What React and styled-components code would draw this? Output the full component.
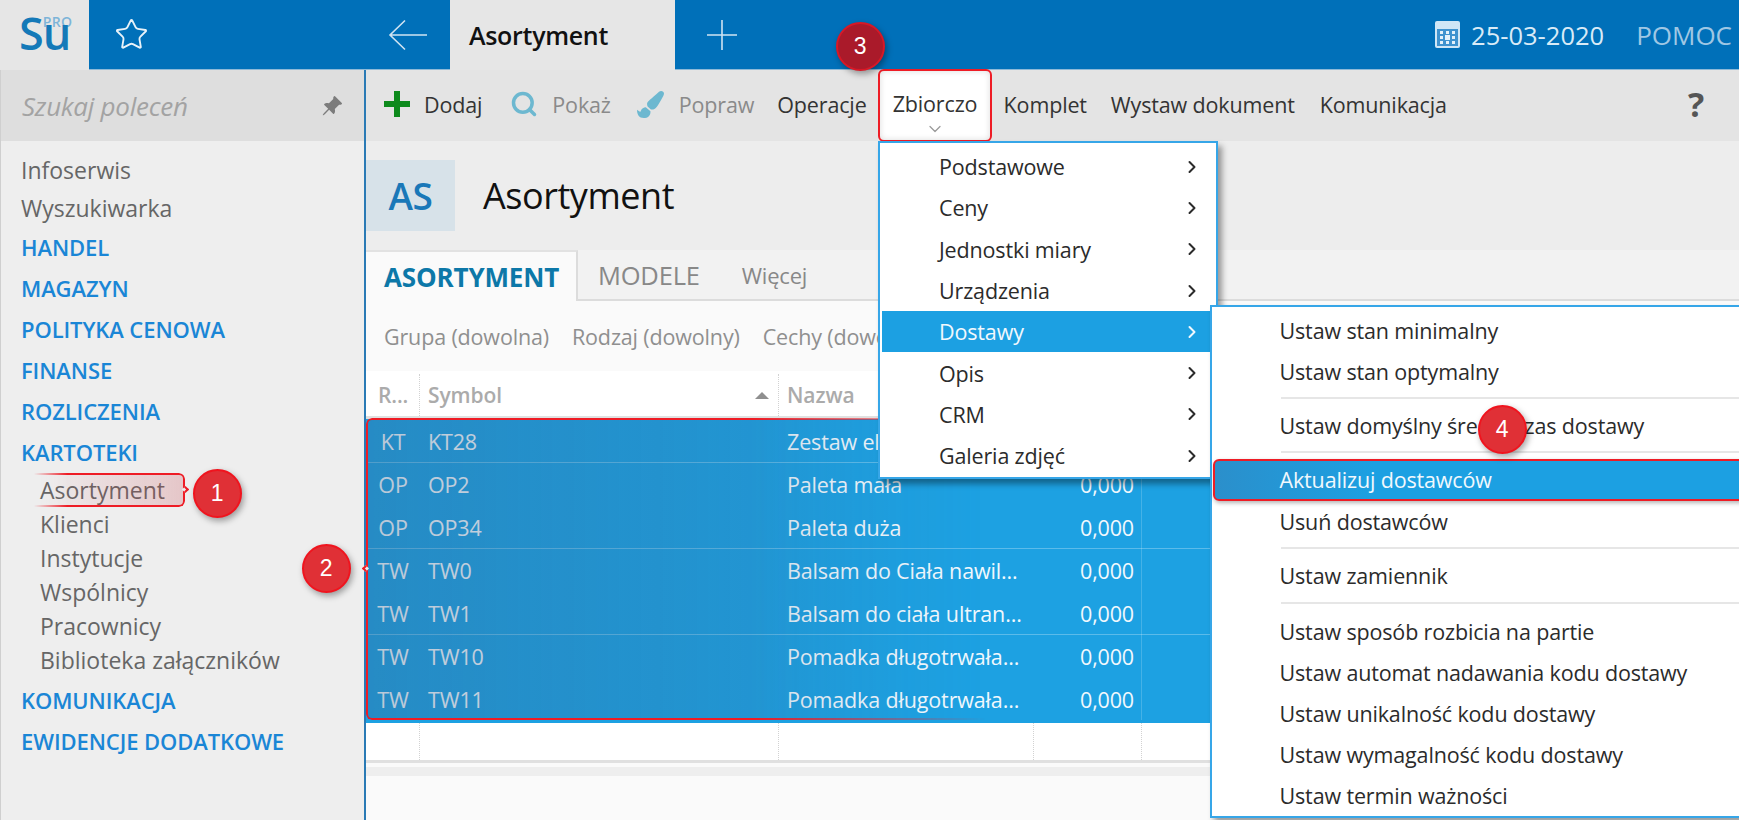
import React from 'react';
import styled, { createGlobalStyle } from 'styled-components';
import { Star, Search, ChevronRight, ChevronDown } from 'lucide-react';
import { BsPinAngleFill } from 'react-icons/bs';
import { FaPaintBrush } from 'react-icons/fa';

const GlobalStyle = createGlobalStyle`
  html, body {
    margin: 0;
    padding: 0;
    overflow: hidden;
    background: #fafafa;
  }
  * {
    box-sizing: border-box;
  }
  body {
    font-family: "Open Sans", "Noto Sans", sans-serif;
    font-size: 21.5px;
    letter-spacing: -0.15px;
    color: #333;
  }
`;

const Page = styled.div`
  position: relative;
  width: 1739px;
  height: 820px;
  overflow: hidden;
`;

const TopBar = styled.header`
  display: flex;
  align-items: stretch;
  height: 70px;
  background: #0070b9;
  border-bottom: 1px solid #8db9d8;
`;

const Logo = styled.div`
  width: 89px;
  height: 70px;
  background: #e6e6e6;
  display: flex;
  padding: 3px 0 0 19px;
  color: #1479b8;
  font-size: 45px;
  font-weight: 600;
  letter-spacing: 0;
  line-height: 60px;
`;

const LogoStack = styled.div`
  display: flex;
  flex-direction: column;
  margin-left: -1px;
  height: 60px;

  b {
    font-size: 14px;
    font-weight: 600;
    line-height: 14px;
    height: 14px;
    margin: 12px 0 -26px;
    letter-spacing: 0.4px;
    color: #7db4d8;
  }
`;

const StarSlot = styled.div`
  width: 299px;
  display: flex;
  align-items: center;
  padding-left: 25px;
  color: #e8f2f9;
`;

const BackSlot = styled.div`
  width: 62px;
  display: flex;
  align-items: center;
`;

const ActiveTab = styled.div`
  width: 225px;
  height: 70px;
  background: #e6e6e6;
  display: flex;
  align-items: center;
  padding-left: 19px;
  color: #111;
  font-size: 25px;
  font-weight: 600;
  letter-spacing: -0.3px;
`;

const AddSlot = styled.div`
  width: 94px;
  display: flex;
  align-items: center;
  justify-content: center;
`;

const TopRight = styled.div`
  margin-left: auto;
  display: flex;
  align-items: center;
  padding-right: 7px;
  color: #d9ebf7;
`;

const DateText = styled.span`
  margin-left: 11px;
  margin-right: 32px;
  font-size: 25.5px;
  letter-spacing: 0;
`;

const Help = styled.span`
  color: #9fc7e4;
  font-size: 26px;
  letter-spacing: 0;
`;

const Body = styled.div`
  display: flex;
  height: 750px;
`;

const Sidebar = styled.aside`
  width: 366px;
  flex: none;
  background: #eeeeee;
  border-left: 1px solid #cfcfcf;
  border-right: 2px solid #2a7ab5;
`;

const SearchBox = styled.div`
  height: 71px;
  background: #dedede;
  display: flex;
  align-items: center;
  justify-content: space-between;
  padding: 0 21px;
  color: #a3a3a3;
  font-size: 26px;
  font-style: italic;
  letter-spacing: -0.25px;

  svg {
    color: #7c7c7c;
  }
`;

const NavList = styled.nav`
  padding: 10px 0 0 20px;
`;

const NavItem = styled.div`
  height: 38px;
  line-height: 38px;
  color: #666;
  font-size: 23px;
  letter-spacing: 0;
`;

const NavGroup = styled.div`
  height: 41px;
  line-height: 41px;
  color: #1a86d6;
  font-size: 22px;
  font-weight: 600;
  letter-spacing: -0.1px;
`;

const NavChild = styled.div`
  position: relative;
  height: 34px;
  line-height: 34px;
  margin-left: 13px;
  margin-bottom: ${(p) => (p.$tail ? 3 : 0)}px;
  width: 151px;
  padding-left: 6px;
  color: #666;
  font-size: 23px;
  letter-spacing: 0;
  white-space: nowrap;
`;

const Marker = styled.span`
  position: absolute;
  inset: 0;
  border: 2px solid #ee1c25;
  border-left: none;
  border-radius: 0 6px 6px 0;
  background: linear-gradient(to right, rgba(230, 60, 60, 0), rgba(200, 60, 70, 0.22));
  box-shadow: 2px 3px 5px rgba(0, 0, 0, 0.08);
  mask-image: linear-gradient(to right, transparent, #000 22%);
`;

const MarkerNotch = styled.span`
  position: absolute;
  right: -3px;
  top: 14px;
  width: 5px;
  height: 5px;
  border-top: 2px solid #ee1c25;
  border-right: 2px solid #ee1c25;
  transform: rotate(45deg);
  background: #eeeeee;
`;

const Main = styled.main`
  flex: 1;
  min-width: 0;
  display: flex;
  flex-direction: column;
`;

const Toolbar = styled.div`
  height: 71px;
  background: #e4e4e4;
  display: flex;
  align-items: center;
  padding: 0 0 3px 18px;
`;

const ToolButton = styled.div`
  display: flex;
  align-items: center;
  height: 100%;
  margin-right: ${(p) => p.$gap}px;
  color: ${(p) => (p.$muted ? '#8a8a8a' : '#333')};
  white-space: nowrap;

  svg {
    margin-right: ${(p) => (p.$iconGap ? p.$iconGap : 14)}px;
    flex: none;
  }
`;

const HelpMark = styled.div`
  margin-left: auto;
  margin-right: 35px;
  font-size: 34px;
  font-weight: 700;
  color: #555;
`;

const TitleArea = styled.div`
  height: 109px;
  background: #ededed;
  display: flex;
  align-items: center;
  padding: 19px 0 20px;
`;

const Tile = styled.div`
  width: 89px;
  height: 71px;
  background: #d7e2e9;
  color: #1a78b8;
  font-size: 37px;
  font-weight: 600;
  display: flex;
  align-items: center;
  justify-content: center;
  letter-spacing: -0.5px;
`;

const Title = styled.h1`
  margin: 0 0 0 28px;
  font-size: 36px;
  font-weight: 400;
  letter-spacing: -0.45px;
  color: #111;
`;

const Tabs = styled.div`
  height: 51px;
  background: #f2f2f2;
  display: flex;
  border-bottom: 2px solid #dcdcdc;
`;

const ActiveSheet = styled.div`
  width: 212px;
  height: 51px;
  padding-left: 18px;
  display: flex;
  align-items: center;
  background: #fafafa;
  border-top: 2px solid #e2e2e2;
  border-right: 2px solid #dcdcdc;
  color: #0d78a8;
  font-size: 26px;
  font-weight: 700;
  letter-spacing: -0.15px;
  white-space: nowrap;
`;

const Tab = styled.div`
  display: flex;
  align-items: center;
  margin-left: ${(p) => p.$gap}px;
  font-size: ${(p) => p.$size}px;
  color: #888;
  letter-spacing: -0.2px;
  white-space: nowrap;
`;

const Filters = styled.div`
  height: 70px;
  background: #fafafa;
  display: flex;
  align-items: center;
  gap: 23px;
  padding-left: 18px;
  color: #8f8f8f;
  white-space: nowrap;
`;

const GRID = '54px 359px 255px 108px 1fr';

const HeadRow = styled.div`
  display: grid;
  grid-template-columns: ${GRID};
  height: 48px;
  padding-top: 3px;
  background: #fff;
  border-bottom: 3px solid #e0e0e0;
  color: #ababab;
  font-size: 21px;
  font-weight: 600;
  letter-spacing: -0.1px;
`;

const HeadCell = styled.div`
  display: flex;
  align-items: center;
  justify-content: space-between;
  padding: 0 9px 0 ${(p) => (p.$first ? 12 : 8)}px;
  border-right: 1px dotted ${(p) => (p.$plain ? 'transparent' : '#d2d2d2')};
  white-space: nowrap;
`;

const SortMark = styled.i`
  width: 0;
  height: 0;
  border-left: 7px solid transparent;
  border-right: 7px solid transparent;
  border-bottom: 7px solid #8f8f8f;
`;

const Rows = styled.div`
  position: relative;
  background: #1da1e2;
  color: #f1f8fd;
  padding-bottom: 3px;
`;

const RowGroup = styled.div`
  box-shadow: 0 1px 0 rgba(255, 255, 255, 0.28);

  &:nth-last-of-type(1) {
    box-shadow: none;
  }
`;

const Row = styled.div`
  display: grid;
  grid-template-columns: ${GRID};
  height: 43px;
  align-items: center;
  white-space: nowrap;
`;

const Cell = styled.div`
  height: 100%;
  display: flex;
  align-items: center;
  justify-content: flex-start;
  padding: 2px 0 0 8px;
`;

const CodeCell = styled(Cell)`
  justify-content: center;
  padding: 2px 0 0;
`;

const QtyCell = styled(Cell)`
  justify-content: flex-end;
  padding: 2px 7px 0 0;
  border-right: 1px solid rgba(255, 255, 255, 0.18);
`;

const Selection = styled.span`
  position: absolute;
  left: 0;
  top: -1px;
  bottom: 3px;
  width: 860px;
  border: 2px solid #ee1c25;
  border-right: none;
  border-radius: 6px 0 0 6px;
  background: linear-gradient(to right, rgba(60, 90, 130, 0.3), rgba(60, 90, 130, 0));
  mask-image: linear-gradient(to right, #000 45%, transparent 72%);
  pointer-events: none;
`;

const SelectionNotch = styled.span`
  position: absolute;
  left: -3px;
  top: 147px;
  width: 5px;
  height: 5px;
  border-bottom: 2px solid #ee1c25;
  border-left: 2px solid #ee1c25;
  transform: rotate(45deg);
  background: #eeeeee;
`;

const EmptyRow = styled.div`
  display: grid;
  grid-template-columns: ${GRID};
  height: 40px;
  background: #fff;
  border-bottom: 3px solid #e0e0e0;

  div {
    border-right: 1px dotted #d2d2d2;
  }
  div:last-child {
    border-right: none;
  }
`;

const Scrollbar = styled.div`
  height: 9px;
  margin-top: 4px;
  background: #eeeeee;
`;

const Menu = styled.div`
  position: absolute;
  left: ${(p) => p.$x}px;
  top: ${(p) => p.$y}px;
  width: ${(p) => p.$w}px;
  background: #fff;
  border: 2px solid #36a6e8;
  padding: ${(p) => p.$pad};
  box-shadow: 4px 5px 6px rgba(0, 0, 0, 0.38);
  color: #2b2b2b;
  z-index: ${(p) => p.$z};
`;

const MenuRow = styled.div`
  position: relative;
  height: ${(p) => p.$h}px;
  display: flex;
  align-items: center;
  justify-content: space-between;
  padding-left: ${(p) => p.$indent}px;
  padding-right: 14px;
  white-space: nowrap;
  background: ${(p) => (p.$on ? '#1ca0e2' : 'transparent')};
  color: ${(p) => (p.$on ? '#f1f8fd' : 'inherit')};
`;

const MarkedRow = styled(MenuRow)`
  border: 2px solid #ee1c25;
  border-radius: 6px 0 0 6px;
  background: linear-gradient(to right, #2b8fcb, #1ca0e2 30%);
  box-shadow: 1px 2px 4px rgba(0, 0, 0, 0.3);
`;

const MenuRule = styled.div`
  height: 2px;
  margin: ${(p) => p.$top}px 0 ${(p) => p.$bottom}px 68px;
  background: #e6e6e6;
`;

const ZbiorczoBox = styled.div`
  position: absolute;
  left: 878px;
  top: 69px;
  width: 114px;
  height: 73px;
  background: #fff;
  border: 2px solid #ee1c25;
  border-radius: 6px;
  box-shadow: inset 0 0 6px rgba(0, 0, 0, 0.14);
  display: flex;
  flex-direction: column;
  align-items: center;
  padding-top: 18px;
  color: #333;
  z-index: 3;

  svg {
    position: absolute;
    bottom: 1px;
    color: #9a9a9a;
  }
`;

const Badge = styled.div`
  position: absolute;
  left: ${(p) => p.$x - 24.5}px;
  top: ${(p) => p.$y - 24.5}px;
  width: 49px;
  height: 49px;
  border-radius: 50%;
  background: ${(p) => (p.$dark ? '#aa1a2a' : '#e03036')};
  border: 2px solid ${(p) => (p.$dark ? '#d81826' : '#f0141e')};
  box-shadow: 2px 3px 6px rgba(0, 0, 0, 0.35);
  color: #fff;
  display: flex;
  align-items: center;
  justify-content: center;
  font-family: "Liberation Sans", Arial, sans-serif;
  font-size: 23px;
  z-index: 6;
`;

const groups = [
  [['KT', 'KT28', 'Zestaw el', '']],
  [
    ['OP', 'OP2', 'Paleta mała', '0,000'],
    ['OP', 'OP34', 'Paleta duża', '0,000'],
  ],
  [
    ['TW', 'TW0', 'Balsam do Ciała nawil...', '0,000'],
    ['TW', 'TW1', 'Balsam do ciała ultran...', '0,000'],
  ],
  [
    ['TW', 'TW10', 'Pomadka długotrwała...', '0,000'],
    ['TW', 'TW11', 'Pomadka długotrwała...', '0,000'],
  ],
];

const mainMenu = ['Podstawowe', 'Ceny', 'Jednostki miary', 'Urządzenia', 'Dostawy', 'Opis', 'CRM', 'Galeria zdjęć'];

const BackArrow = () => (
  <svg width="40" height="32" viewBox="0 0 40 32" fill="none" stroke="#cfe3f2" strokeWidth="1.6">
    <path d="M39 16H2M17 1.5 2 16l15 14.5" />
  </svg>
);

const PlusThin = () => (
  <svg width="32" height="32" viewBox="0 0 32 32" stroke="#cfe3f2" strokeWidth="1.6">
    <path d="M16 1v30M1 16h30" />
  </svg>
);

const PlusGreen = () => (
  <svg width="26" height="26" viewBox="0 0 26 26" fill="#0d8a1c">
    <path d="M10 0h6v10h10v6H16v10h-6V16H0v-6h10z" />
  </svg>
);

const CalendarIcon = () => (
  <svg width="25" height="27" viewBox="0 0 25 27">
    <rect width="25" height="27" rx="2" fill="#cfe6f6" />
    <rect x="2" y="8" width="21" height="17" fill="#3f93cf" />
    <g fill="#e3f1fa">
      <rect x="5" y="10" width="3" height="3" />
      <rect x="11" y="10" width="3" height="3" />
      <rect x="17" y="10" width="3" height="3" />
      <rect x="5" y="15" width="3" height="3" />
      <rect x="10" y="14" width="5" height="5" />
      <rect x="17" y="15" width="3" height="3" />
      <rect x="5" y="20" width="3" height="3" />
      <rect x="11" y="20" width="3" height="3" />
      <rect x="17" y="20" width="3" height="3" />
    </g>
  </svg>
);

const App = () => (
  <Page>
    <GlobalStyle />
    <TopBar>
      <Logo>
        S
        <LogoStack>
          <b>PRO</b>
          <span>u</span>
        </LogoStack>
      </Logo>
      <StarSlot>
        <Star size={35} strokeWidth={1.3} />
      </StarSlot>
      <BackSlot>
        <BackArrow />
      </BackSlot>
      <ActiveTab>Asortyment</ActiveTab>
      <AddSlot>
        <PlusThin />
      </AddSlot>
      <TopRight>
        <CalendarIcon />
        <DateText>25-03-2020</DateText>
        <Help>POMOC</Help>
      </TopRight>
    </TopBar>

    <Body>
      <Sidebar>
        <SearchBox>
          Szukaj poleceń
          <BsPinAngleFill size={22} />
        </SearchBox>
        <NavList>
          <NavItem>Infoserwis</NavItem>
          <NavItem>Wyszukiwarka</NavItem>
          <NavGroup>HANDEL</NavGroup>
          <NavGroup>MAGAZYN</NavGroup>
          <NavGroup>POLITYKA CENOWA</NavGroup>
          <NavGroup>FINANSE</NavGroup>
          <NavGroup>ROZLICZENIA</NavGroup>
          <NavGroup>KARTOTEKI</NavGroup>
          <NavChild>
            <Marker />
            <MarkerNotch />
            Asortyment
          </NavChild>
          <NavChild>Klienci</NavChild>
          <NavChild>Instytucje</NavChild>
          <NavChild>Wspólnicy</NavChild>
          <NavChild>Pracownicy</NavChild>
          <NavChild $tail>Biblioteka załączników</NavChild>
          <NavGroup>KOMUNIKACJA</NavGroup>
          <NavGroup>EWIDENCJE DODATKOWE</NavGroup>
        </NavList>
      </Sidebar>

      <Main>
        <Toolbar>
          <ToolButton $gap={28} $iconGap={14}>
            <PlusGreen />
            Dodaj
          </ToolButton>
          <ToolButton $gap={26} $iconGap={14} $muted>
            <Search size={28} strokeWidth={3} color="#6db8d0" />
            Pokaż
          </ToolButton>
          <ToolButton $gap={23} $iconGap={15} $muted>
            <FaPaintBrush size={27} color="#6db8d0" />
            Popraw
          </ToolButton>
          <ToolButton $gap={137}>Operacje</ToolButton>
          <ToolButton $gap={24}>Komplet</ToolButton>
          <ToolButton $gap={25}>Wystaw dokument</ToolButton>
          <ToolButton $gap={0}>Komunikacja</ToolButton>
          <HelpMark>?</HelpMark>
        </Toolbar>

        <TitleArea>
          <Tile>AS</Tile>
          <Title>Asortyment</Title>
        </TitleArea>

        <Tabs>
          <ActiveSheet>ASORTYMENT</ActiveSheet>
          <Tab $gap={20} $size={25.5}>MODELE</Tab>
          <Tab $gap={42} $size={22}>Więcej</Tab>
        </Tabs>

        <Filters>
          <span>Grupa (dowolna)</span>
          <span>Rodzaj (dowolny)</span>
          <span>Cechy (dowolne)</span>
        </Filters>

        <HeadRow>
          <HeadCell $first>R...</HeadCell>
          <HeadCell>
            Symbol
            <SortMark />
          </HeadCell>
          <HeadCell>Nazwa</HeadCell>
          <HeadCell />
          <HeadCell $plain />
        </HeadRow>

        <Rows>
          {groups.map((group) => (
            <RowGroup key={group[0][1]}>
              {group.map(([code, symbol, name, qty]) => (
                <Row key={symbol}>
                  <CodeCell>{code}</CodeCell>
                  <Cell>{symbol}</Cell>
                  <Cell>{name}</Cell>
                  <QtyCell>{qty}</QtyCell>
                  <Cell />
                </Row>
              ))}
            </RowGroup>
          ))}
          <Selection />
          <SelectionNotch />
        </Rows>

        <EmptyRow>
          <div />
          <div />
          <div />
          <div />
          <div />
        </EmptyRow>
        <Scrollbar />
      </Main>
    </Body>

    <ZbiorczoBox>
      Zbiorczo
      <ChevronDown size={20} strokeWidth={1.5} />
    </ZbiorczoBox>

    <Menu $x={878} $y={141} $w={340} $pad="3px 0 1px 2px" $z={4}>
      {mainMenu.map((label) => (
        <MenuRow key={label} $h={41.3} $indent={57} $on={label === 'Dostawy'}>
          {label}
          <ChevronRight size={20} strokeWidth={2.4} />
        </MenuRow>
      ))}
    </Menu>

    <Menu $x={1210} $y={305} $w={540} $pad="2.5px 0 0 1px" $z={5}>
      <MenuRow $h={41} $indent={66.5}>Ustaw stan minimalny</MenuRow>
      <MenuRow $h={41} $indent={66.5}>Ustaw stan optymalny</MenuRow>
      <MenuRule $top={5.5} $bottom={5.5} />
      <MenuRow $h={41} $indent={66.5}>Ustaw domyślny średni czas dostawy</MenuRow>
      <MenuRule $top={5.5} $bottom={5.5} />
      <MarkedRow $h={42} $indent={64.5} $on>Aktualizuj dostawców</MarkedRow>
      <MenuRow $h={41} $indent={66.5}>Usuń dostawców</MenuRow>
      <MenuRule $top={5.5} $bottom={5.5} />
      <MenuRow $h={41} $indent={66.5}>Ustaw zamiennik</MenuRow>
      <MenuRule $top={6.5} $bottom={6.5} />
      <MenuRow $h={41} $indent={66.5}>Ustaw sposób rozbicia na partie</MenuRow>
      <MenuRow $h={41} $indent={66.5}>Ustaw automat nadawania kodu dostawy</MenuRow>
      <MenuRow $h={41} $indent={66.5}>Ustaw unikalność kodu dostawy</MenuRow>
      <MenuRow $h={41} $indent={66.5}>Ustaw wymagalność kodu dostawy</MenuRow>
      <MenuRow $h={41} $indent={66.5}>Ustaw termin ważności</MenuRow>
    </Menu>

    <Badge $x={217} $y={493}>1</Badge>
    <Badge $x={326} $y={568}>2</Badge>
    <Badge $x={860} $y={46} $dark>3</Badge>
    <Badge $x={1502} $y={429}>4</Badge>
  </Page>
);

export default App;
